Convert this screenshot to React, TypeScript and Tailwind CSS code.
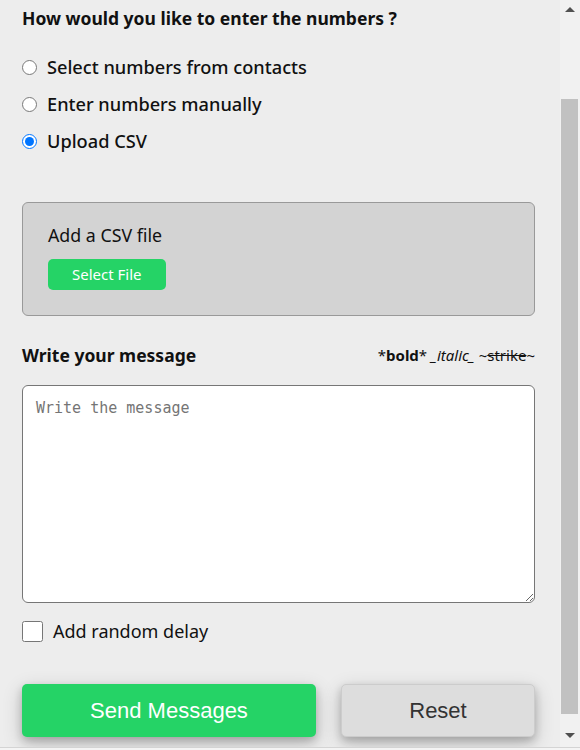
import { useState } from "react";

const options = [
  "Select numbers from contacts",
  "Enter numbers manually",
  "Upload CSV",
];

const Scrollbar = () => (
  <div className="w-[20px] h-full bg-[#f1f1f1] flex flex-col shrink-0">
    <div className="h-[99px] flex justify-center pt-[7px]">
      <svg width="10" height="6" viewBox="0 0 10 6">
        <polygon points="5,0 10,5 0,5" fill="#505050" />
      </svg>
    </div>
    <div className="h-[615px] ml-[1px] w-[17px] bg-[#c1c1c1]" />
    <div className="flex-1 flex justify-center items-end pb-[8px]">
      <svg width="10" height="6" viewBox="0 0 10 6">
        <polygon points="0,0 10,0 5,5" fill="#505050" />
      </svg>
    </div>
  </div>
);

const App = () => {
  const [mode, setMode] = useState("Upload CSV");
  const [message, setMessage] = useState("");
  const [delay, setDelay] = useState(false);

  return (
    <div className="h-[750px] w-[580px] flex flex-col bg-[#ededed] overflow-hidden font-['Noto_Sans',sans-serif] text-[#111]">
      <div className="flex h-[747px]">
        <div className="flex-1 pl-[22px] pr-[25px] pt-[6px]">
          <h2 className="text-[17.5px] leading-[24px] font-bold">
            How would you like to enter the numbers ?
          </h2>

          {/* Number source */}
          <div className="mt-[24px] flex flex-col gap-[11px]">
            {options.map((opt) => (
              <label
                key={opt}
                className="flex items-center gap-[10px] text-[18.2px] leading-[26px] font-medium"
              >
                <input
                  type="radio"
                  name="mode"
                  checked={mode === opt}
                  onChange={() => setMode(opt)}
                  className="w-[15px] h-[15px] m-0 accent-[#0075ff]"
                />
                {opt}
              </label>
            ))}
          </div>

          {/* CSV upload */}
          <div className="mt-[48px] bg-[#d3d3d3] border border-[#999] rounded-[6px] px-[25px] pt-[20px] pb-[25px]">
            <p className="text-[17.8px] leading-[24px]">Add a CSV file</p>
            <button className="mt-[12px] h-[31px] px-[24px] bg-[#25d366] text-white text-[15px] rounded-[5px]">
              Select File
            </button>
          </div>

          {/* Message */}
          <div className="mt-[27px] flex items-center justify-between">
            <span className="text-[17.5px] leading-[24px] font-bold">
              Write your message
            </span>
            <span className="text-[15px] leading-[24px]">
              *<b>bold</b>* <i>_italic_</i> ~<s>strike</s>~
            </span>
          </div>
          <textarea
            value={message}
            onChange={(e) => setMessage(e.target.value)}
            placeholder="Write the message"
            className="mt-[18px] block w-full h-[218px] bg-white border border-[#767676] rounded-[6px] p-[13px] pt-[13px] font-['DejaVu_Sans_Mono',monospace] text-[15px] leading-[18px] placeholder:text-[#757575] outline-none"
          />

          <label className="mt-[15px] flex items-center gap-[10px] text-[18px] leading-[26px]">
            <input
              type="checkbox"
              checked={delay}
              onChange={() => setDelay(!delay)}
              className="w-[21px] h-[21px] m-0"
            />
            Add random delay
          </label>

          {/* Actions */}
          <div className="mt-[40px] flex gap-[25px]">
            <button className="w-[294px] h-[53px] bg-[#25d366] text-white rounded-[5px] text-[22px] font-['Liberation_Sans',Arial,sans-serif] shadow-[0_4px_8px_0_rgba(0,0,0,0.2),0_6px_20px_0_rgba(0,0,0,0.19)]">
              Send Messages
            </button>
            <button className="flex-1 h-[53px] bg-[#dddddd] border border-[#cccccc] text-[#333] rounded-[5px] text-[22px] font-['Liberation_Sans',Arial,sans-serif] shadow-[0_4px_8px_0_rgba(0,0,0,0.2),0_6px_20px_0_rgba(0,0,0,0.19)]">
              Reset
            </button>
          </div>
        </div>
        <Scrollbar />
      </div>
      <div className="h-[1px] bg-[#d4d4d4]" />
      <div className="flex-1 bg-[#f4f4f4]" />
    </div>
  );
};

export default App;
